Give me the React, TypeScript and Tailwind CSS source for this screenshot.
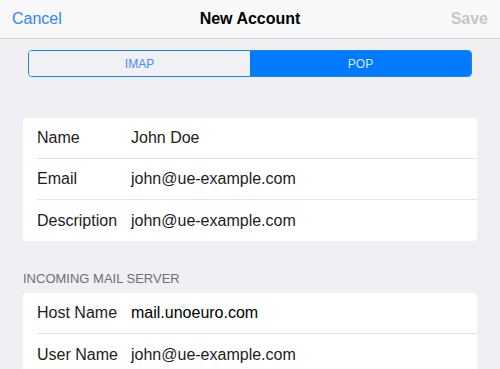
import React from "react";

type Row = { label: string; value: string; strong?: boolean };

const accountRows: Row[] = [
  { label: "Name", value: "John Doe" },
  { label: "Email", value: "john@ue-example.com" },
  { label: "Description", value: "john@ue-example.com" },
];

const serverRows: Row[] = [
  { label: "Host Name", value: "mail.unoeuro.com", strong: true },
  { label: "User Name", value: "john@ue-example.com" },
];

function Group({ rows }: { rows: Row[] }) {
  return (
    <div className="mx-[23px] rounded-[4px] bg-white">
      {rows.map((row, i) => (
        <div key={row.label} className="pl-[14px]">
          <div
            className={
              "flex items-center text-[16px] " +
              (i < rows.length - 1 ? "h-[41px] border-b border-[#e3e3e6]" : "h-[41px]")
            }
          >
            <span className="w-[94px] shrink-0 text-[#1c1c1c]">{row.label}</span>
            <span className={row.strong ? "text-black" : "text-[#1c1c1c]"}>{row.value}</span>
          </div>
        </div>
      ))}
    </div>
  );
}

export default function App() {
  return (
    <div
      className="h-[369px] w-[500px] overflow-hidden bg-[#efeff4]"
      style={{ fontFamily: '"Liberation Sans", Arial, sans-serif' }}
    >
      {/* nav bar */}
      <div className="grid h-[39px] grid-cols-[1fr_auto_1fr] items-center border-b border-[#d4d4d8] bg-[#f8f8f9] px-[12px] text-[16px]">
        <span className="text-[#2f86f6]">Cancel</span>
        <span className="font-bold text-black">New Account</span>
        <span className="justify-self-end font-bold text-[#c6c6c9]">Save</span>
      </div>

      {/* segmented control */}
      <div className="mx-[28px] mt-[11px] flex h-[27px] overflow-hidden rounded-[4px] border border-[#1a84ff] text-[12px]">
        <div className="flex flex-1 items-center justify-center bg-[#f1f1f5] text-[#3d8ef8]">IMAP</div>
        <div className="flex flex-1 items-center justify-center bg-[#007aff] text-[#dbe9ff]">POP</div>
      </div>

      <div className="mt-[41px]">
        <Group rows={accountRows} />
      </div>

      <div className="mx-[23px] mt-[30px] mb-[6px] h-[16px] text-[13px] leading-[16px] text-[#707075]">
        INCOMING MAIL SERVER
      </div>

      <Group rows={serverRows} />
    </div>
  );
}
